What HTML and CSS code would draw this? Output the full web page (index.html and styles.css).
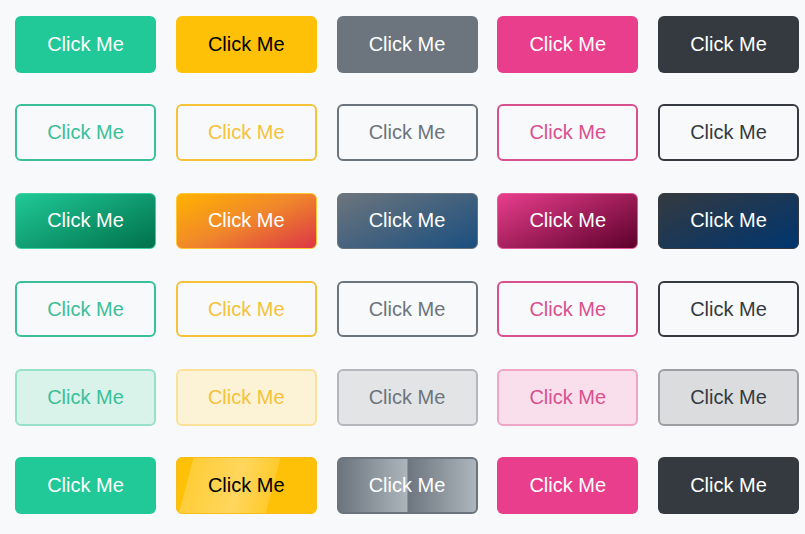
FILE: index.html
```html
<!DOCTYPE html>
<html lang="en">
<head>
    <meta charset="UTF-8">
    <meta name="viewport" content="width=device-width, initial-scale=1.0">
    <title>Buttons</title>
    <link rel="stylesheet" href="styles.css">
</head>
<body>
    <main class="grid">
        <!-- solid -->
        <button class="btn solid green">Click Me</button>
        <button class="btn solid yellow">Click Me</button>
        <button class="btn solid gray">Click Me</button>
        <button class="btn solid pink">Click Me</button>
        <button class="btn solid dark">Click Me</button>

        <!-- outline -->
        <button class="btn outline green">Click Me</button>
        <button class="btn outline yellow">Click Me</button>
        <button class="btn outline gray">Click Me</button>
        <button class="btn outline pink">Click Me</button>
        <button class="btn outline dark">Click Me</button>

        <!-- gradient -->
        <button class="btn grad green">Click Me</button>
        <button class="btn grad yellow">Click Me</button>
        <button class="btn grad gray">Click Me</button>
        <button class="btn grad pink">Click Me</button>
        <button class="btn grad dark">Click Me</button>

        <!-- outline again -->
        <button class="btn outline green">Click Me</button>
        <button class="btn outline yellow">Click Me</button>
        <button class="btn outline gray">Click Me</button>
        <button class="btn outline pink">Click Me</button>
        <button class="btn outline dark">Click Me</button>

        <!-- soft -->
        <button class="btn soft green">Click Me</button>
        <button class="btn soft yellow">Click Me</button>
        <button class="btn soft gray">Click Me</button>
        <button class="btn soft pink">Click Me</button>
        <button class="btn soft dark">Click Me</button>

        <!-- fancy -->
        <button class="btn solid green">Click Me</button>
        <button class="btn shine yellow"><span>Click Me</span></button>
        <button class="btn split gray">Click Me</button>
        <button class="btn solid pink">Click Me</button>
        <button class="btn solid dark">Click Me</button>
    </main>
</body>
</html>
```

FILE: styles.css
```css
body {
    margin: 0;
    background-color: #f8f9fa;
    font-family: "Liberation Sans", Arial, sans-serif;
}

.grid {
    display: grid;
    grid-template-columns: repeat(5, 141px);
    grid-auto-rows: 56.5px;
    column-gap: 19.75px;
    row-gap: 31.75px;
    padding: 16px 0 0 15px;
}

.btn {
    font: normal 20px "Liberation Sans", Arial, sans-serif;
    border-radius: 6px;
    border: 2px solid transparent;
    padding: 0;
    cursor: pointer;
    position: relative;
    overflow: hidden;
}

/* solid */
.solid { color: #fff; border-width: 0; }
.solid.green { background-color: #20c997; }
.solid.yellow { background-color: #ffc107; color: #000; }
.solid.gray { background-color: #6c757d; }
.solid.pink { background-color: #e83e8c; }
.solid.dark { background-color: #343a40; }

/* outline */
.outline { background: transparent; }
.outline.green { border-color: #3bbf98; color: #3bbf98; }
.outline.yellow { border-color: #f5c23a; color: #f5c23a; }
.outline.gray { border-color: #6c757d; color: #6c757d; }
.outline.pink { border-color: #d9508f; color: #d9508f; }
.outline.dark { border-color: #343a40; color: #343a40; }

/* gradient */
.grad { color: #fff; border-width: 1px; }
.grad.green {
    background: linear-gradient(155deg, #20c997, #00704a);
    border-color: #3ccf9f;
}
.grad.yellow {
    background: linear-gradient(155deg, #ffb300, #f0862c 50%, #dc3545);
    border-color: #ffc733;
}
.grad.gray {
    background: linear-gradient(155deg, #6c757d, #1b4f7f);
    border-color: #6c757d;
}
.grad.pink {
    background: linear-gradient(155deg, #e83e8c, #5c002b);
    border-color: #e8589a;
}
.grad.dark {
    background: linear-gradient(155deg, #343a40, #00356f);
    border-color: #343a40;
}

/* soft */
.soft.green { background-color: #d9f3eb; border-color: #96e1c8; color: #3bbf98; }
.soft.yellow { background-color: #fcf2d6; border-color: #fbe19a; color: #f5c23a; }
.soft.gray { background-color: #e3e4e6; border-color: #b4b8bc; color: #6c757d; }
.soft.pink { background-color: #f9dfeb; border-color: #f0a4c6; color: #d9508f; }
.soft.dark { background-color: #dbdcde; border-color: #9c9ea1; color: #343a40; }

/* shine */
.shine {
    background-color: #ffc107;
    border: 1px solid #f8bd1a;
    color: #000;
}
.shine::before {
    content: "";
    position: absolute;
    top: 0;
    bottom: 0;
    left: 2px;
    width: 87px;
    transform: skewX(-15deg);
    transform-origin: bottom left;
    background: linear-gradient(90deg, rgba(255, 255, 255, 0.2), rgba(255, 255, 255, 0.35) 60%, rgba(255, 255, 255, 0.15));
}
.shine span { position: relative; }

/* split */
.split {
    background-image: linear-gradient(90deg, #6c757d, #adb5bd);
    background-size: 50% 100%;
    background-repeat: repeat-x;
    border-color: #6c757d;
    color: #fff;
}
```
